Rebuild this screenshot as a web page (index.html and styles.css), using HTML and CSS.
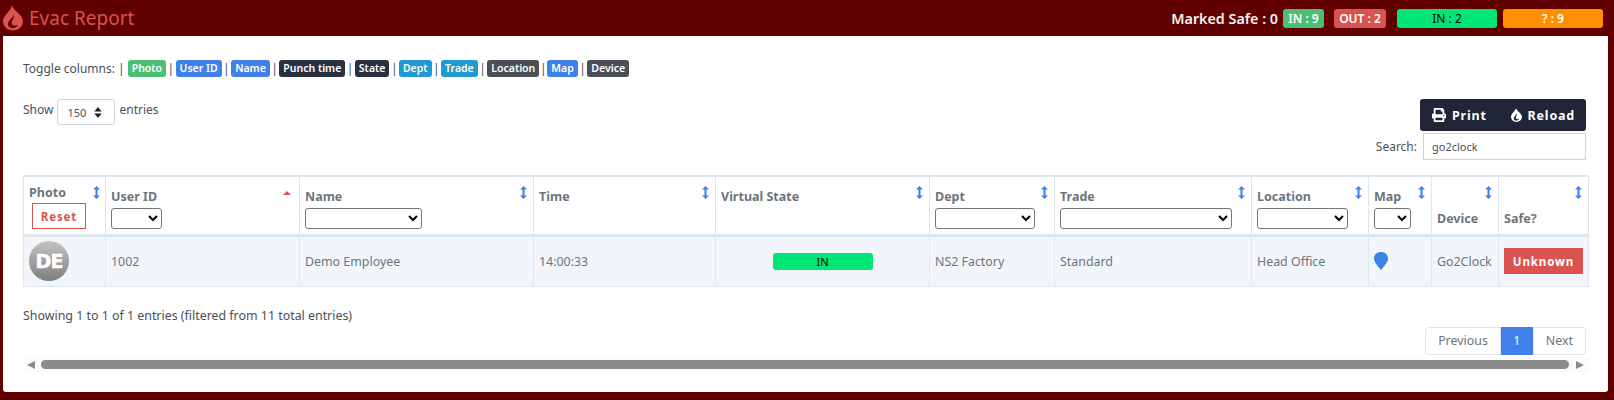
FILE: index.html
```html
<!DOCTYPE html>
<html lang="en">
<head>
  <meta charset="UTF-8">
  <meta name="viewport" content="width=device-width, initial-scale=1.0">
  <title>Evac Report</title>
  <link rel="stylesheet" href="styles.css">
</head>
<body>

  <svg class="icon-defs" aria-hidden="true">
    <symbol id="flame" viewBox="0 0 24 30">
      <path fill-rule="evenodd" d="M11 0C12 6 24 11 24 19C24 25.500 18.500 30 12 30C5.500 30 0 25.500 0 19C0 12 8 8 11 0ZM13 11C11 16 6 18 6 22.500C6 25.500 9 27 12 27C15 27 17 25.500 17.500 23C15.500 24.500 10.500 25 10.500 21C10.500 18 13.500 16 13 11Z"/>
    </symbol>
    <symbol id="sort" viewBox="0 0 7 13">
      <path d="M3.500 0L7 3.500H4.500V9.500H7L3.500 13L0 9.500H2.500V3.500H0Z"/>
    </symbol>
  </svg>

  <header class="topbar">
    <div class="brand">
      <svg class="brand-icon"><use href="#flame"></use></svg>
      <span>Evac Report</span>
    </div>
    <div class="totals">
      <span class="marked">Marked Safe : 0</span>
      <span class="tag tag-green">IN : 9</span>
      <span class="tag tag-red">OUT : 2</span>
      <span class="wide wide-green">IN : 2</span>
      <span class="wide wide-orange">? : 9</span>
    </div>
  </header>

  <main class="card">
    <div class="toggles">
      <span class="toggle-label">Toggle columns: |</span>
      <a class="pill pill-green">Photo</a><i>|</i>
      <a class="pill pill-blue">User ID</a><i>|</i>
      <a class="pill pill-blue">Name</a><i>|</i>
      <a class="pill pill-dark">Punch time</a><i>|</i>
      <a class="pill pill-dark">State</a><i>|</i>
      <a class="pill pill-cyan">Dept</a><i>|</i>
      <a class="pill pill-cyan">Trade</a><i>|</i>
      <a class="pill pill-grey">Location</a><i class="tight">|</i>
      <a class="pill pill-blue">Map</a><i>|</i>
      <a class="pill pill-grey">Device</a>
    </div>

    <div class="controls">
      <label class="length"><span class="length-text">Show</span>
        <select class="length-select"><option>150</option></select>
        <span class="length-text">entries</span>
      </label>
      <div class="controls-right">
        <div class="actions">
          <button class="action" type="button">
            <svg class="print-icon" viewBox="0 0 512 512"><path d="M448 192V77.250c0-8.490-3.370-16.620-9.370-22.630L393.370 9.370c-6-6-14.140-9.370-22.630-9.370H96C78.330 0 64 14.330 64 32v160c-35.350 0-64 28.650-64 64v112c0 8.840 7.160 16 16 16h48v96c0 17.670 14.330 32 32 32h320c17.670 0 32-14.330 32-32v-96h48c8.840 0 16-7.160 16-16V256c0-35.350-28.650-64-64-64zm-64 256H128v-96h256v96zm0-224H128V64h192v48c0 8.840 7.160 16 16 16h48v96zm48 72c-13.250 0-24-10.750-24-24 0-13.260 10.750-24 24-24s24 10.740 24 24c0 13.250-10.750 24-24 24z"/></svg>
            Print
          </button>
          <button class="action" type="button">
            <svg class="reload-icon"><use href="#flame"></use></svg>
            Reload
          </button>
        </div>
        <label class="search">Search:
          <input class="search-input" type="text" value="go2clock">
        </label>
      </div>
    </div>

    <table class="report">
      <colgroup>
        <col class="c-photo"><col class="c-id"><col class="c-name"><col class="c-time"><col class="c-state"><col class="c-dept">
        <col class="c-trade"><col class="c-loc"><col class="c-map"><col class="c-device"><col class="c-safe">
      </colgroup>
      <thead>
        <tr>
          <th class="th-photo">Photo<svg class="sort"><use href="#sort"></use></svg>
            <button class="reset" type="button">Reset</button></th>
          <th>User ID<span class="sort-asc"></span><select class="filter f-id"></select></th>
          <th>Name<svg class="sort"><use href="#sort"></use></svg><select class="filter f-name"></select></th>
          <th>Time<svg class="sort"><use href="#sort"></use></svg></th>
          <th>Virtual State<svg class="sort"><use href="#sort"></use></svg></th>
          <th>Dept<svg class="sort"><use href="#sort"></use></svg><select class="filter f-dept"></select></th>
          <th>Trade<svg class="sort"><use href="#sort"></use></svg><select class="filter f-trade"></select></th>
          <th>Location<svg class="sort"><use href="#sort"></use></svg><select class="filter f-loc"></select></th>
          <th>Map<svg class="sort"><use href="#sort"></use></svg><select class="filter f-map"></select></th>
          <th class="th-low">Device<svg class="sort"><use href="#sort"></use></svg></th>
          <th class="th-low">Safe?<svg class="sort"><use href="#sort"></use></svg></th>
        </tr>
      </thead>
      <tbody>
        <tr>
          <td><div class="avatar">DE</div></td>
          <td>1002</td>
          <td>Demo Employee</td>
          <td>14:00:33</td>
          <td><div class="state">IN</div></td>
          <td>NS2 Factory</td>
          <td>Standard</td>
          <td>Head Office</td>
          <td><svg class="pin" viewBox="0 0 14 18"><path d="M7 0C3 0 0 2.800 0 6.500C0 10.500 4.500 14.500 7 18C9.500 14.500 14 10.500 14 6.500C14 2.800 11 0 7 0Z"/></svg></td>
          <td>Go2Clock</td>
          <td><button class="unknown" type="button">Unknown</button></td>
        </tr>
      </tbody>
    </table>

    <div class="info">Showing 1 to 1 of 1 entries (filtered from 11 total entries)</div>

    <div class="pager">
      <a class="page">Previous</a>
      <a class="page page-on">1</a>
      <a class="page">Next</a>
    </div>

    <div class="scroller">
      <span class="arrow-left"></span>
      <span class="thumb"></span>
      <span class="arrow-right"></span>
    </div>
  </main>

</body>
</html>
```

FILE: styles.css
```css
* {
  margin: 0;
  padding: 0;
  box-sizing: border-box;
}

html, body {
  height: 400px;
  overflow: hidden;
}

body {
  font-family: "Noto Sans", Arial, sans-serif;
  font-size: 12px;
  color: #495057;
  background: #600000;
}

.icon-defs {
  display: none;
}

/* Top bar */
.topbar {
  height: 36px;
  display: flex;
  justify-content: space-between;
  align-items: center;
  padding: 0 11px 0 3px;
}

.brand {
  display: flex;
  align-items: center;
  gap: 6px;
  color: #d9534f;
  font-size: 19px;
}

.brand-icon {
  width: 20px;
  height: 26px;
  fill: #d9534f;
}

.totals {
  display: flex;
  align-items: center;
}

.marked {
  color: #f3f3f3;
  font-size: 14.300px;
  font-weight: 600;
  margin-right: 5px;
}

.tag,
.wide {
  font-size: 12px;
  font-weight: 600;
  text-align: center;
  border-radius: 3px;
  height: 19px;
  line-height: 19px;
  color: #fff;
}

.tag-green {
  width: 41px;
  background: #4bbf73;
}

.tag-red {
  width: 52px;
  margin-left: 10px;
  background: #d9534f;
}

.wide {
  width: 100px;
  font-weight: 400;
}

.wide-green {
  margin-left: 11px;
  background: #00e676;
  color: #000;
}

.wide-orange {
  margin-left: 6px;
  background: #ff8f00;
  font-weight: 600;
}

/* Card */
.card {
  background: #fff;
  margin: 0 6px 0 3px;
  height: 356px;
  padding: 24px 20px 0;
  border-radius: 0 0 3px 3px;
}

.toggles {
  display: flex;
  align-items: center;
  height: 17px;
  white-space: nowrap;
  font-size: 12px;
}

.toggle-label {
  margin-right: 3px;
}

.toggles i {
  font-style: normal;
  width: 9.500px;
  text-align: center;
  font-size: 12px;
}

.toggles .tight {
  width: 8px;
}

.pill {
  height: 17px;
  line-height: 17px;
  padding: 0 4px;
  border-radius: 3px;
  color: #fff;
  font-size: 10.500px;
  font-weight: 600;
}

.pill-green { background: #4bbf73; }
.pill-blue { background: #3f80ea; }
.pill-dark { background: #293042; }
.pill-cyan { background: #1f9bcf; }
.pill-grey { background: #495057; }

/* Show / search row */
.controls {
  display: flex;
  justify-content: space-between;
  margin-top: 22px;
  padding-right: 2px;
  height: 76px;
}

.length {
  display: flex;
  align-items: flex-start;
  gap: 4px;
  height: 26px;
  font-size: 12px;
}

.length-text {
  line-height: 21px;
}

.length-select {
  appearance: none;
  width: 58px;
  height: 26px;
  padding-left: 9px;
  border: 1px solid #ced4da;
  border-radius: 3px;
  background: #fff url("data:image/svg+xml,%3Csvg xmlns='http://www.w3.org/2000/svg' viewBox='0 0 8 12'%3E%3Cpath d='M4 0L8 5H0ZM4 12L0 7H8Z' fill='%23222'/%3E%3C/svg%3E") no-repeat right 12px center / 8px 11px;
  color: #495057;
  font: 11px "Noto Sans", Arial, sans-serif;
}

.controls-right {
  display: flex;
  flex-direction: column;
  align-items: flex-end;
  gap: 2px;
}

.actions {
  display: flex;
  width: 166px;
  height: 32px;
  padding: 0 11px 0 12px;
  justify-content: space-between;
  background: #1f2536;
  border-radius: 3px;
}

.action {
  display: flex;
  align-items: center;
  gap: 6px;
  border: none;
  background: none;
  color: #fff;
  font: 700 12.500px "Noto Sans", Arial, sans-serif;
  letter-spacing: 0.800px;
}

.print-icon {
  width: 14px;
  height: 14px;
  fill: #fff;
}

.reload-icon {
  width: 11px;
  height: 14px;
  fill: #fff;
}

.search {
  display: flex;
  align-items: center;
  gap: 6px;
  font-size: 12px;
}

.search-input {
  width: 163px;
  height: 27px;
  padding: 0 8px;
  border: 1px solid #ced4da;
  color: #495057;
  font: 11px "Noto Sans", Arial, sans-serif;
}

/* Table */
.report {
  width: 1565px;
  height: 112px;
  table-layout: fixed;
  border-collapse: collapse;
  color: #6c757d;
}

.c-photo { width: 82px; }
.c-id { width: 194px; }
.c-name { width: 234px; }
.c-time { width: 182px; }
.c-state { width: 214px; }
.c-dept { width: 125px; }
.c-trade { width: 197px; }
.c-loc { width: 117px; }
.c-map { width: 63px; }
.c-device { width: 67px; }
.c-safe { width: 90px; }

.report th {
  position: relative;
  height: 59px;
  padding: 12px 5px 0;
  border: 1px solid #dee6ee;
  border-top-width: 2px;
  border-bottom: 3px solid #dee6ee;
  font-size: 12.500px;
  font-weight: 700;
  line-height: 16px;
  text-align: left;
  vertical-align: top;
  white-space: nowrap;
}

.report .th-photo {
  padding-top: 8px;
}

.report .th-low {
  padding-top: 34px;
}

.report td {
  height: 51px;
  padding: 0 5px;
  border: 1px solid #dee6ee;
  background: #f2f6fa;
  font-size: 12.400px;
  white-space: nowrap;
}

.sort {
  position: absolute;
  top: 9px;
  right: 6px;
  width: 7px;
  height: 13px;
  fill: #3f80ea;
}

.th-photo .sort {
  right: 5px;
}

.sort-asc {
  position: absolute;
  top: 14px;
  right: 8px;
  border-left: 4px solid transparent;
  border-right: 4px solid transparent;
  border-bottom: 4px solid #d9534f;
}

.reset {
  display: block;
  width: 54px;
  height: 26px;
  margin: 2px 0 0 3px;
  border: 1px solid #d9534f;
  background: #fff;
  color: #d9534f;
  font: 700 11.500px "Noto Sans", Arial, sans-serif;
  letter-spacing: 0.900px;
}

.filter {
  display: block;
  height: 21px;
  margin-top: 3px;
  background: #fff;
  border-radius: 3px;
}

.f-id { width: 51px; }
.f-name { width: 117px; }
.f-dept { width: 100px; }
.f-trade { width: 172px; }
.f-loc { width: 91px; }
.f-map { width: 37px; }

.avatar {
  width: 40px;
  height: 40px;
  border-radius: 50%;
  background: linear-gradient(#c4c4c4, #7f7f7f);
  color: #fff;
  font: 700 19px/40px "DejaVu Sans", Arial, sans-serif;
  -webkit-text-stroke: 0.500px #fff;
  text-align: center;
  letter-spacing: -1px;
}

.state {
  width: 100px;
  height: 17px;
  margin: 0 auto;
  background: #00e676;
  border-radius: 3px;
  color: #000;
  font-size: 11px;
  line-height: 17px;
  text-align: center;
}

.pin {
  display: block;
  width: 14px;
  height: 18px;
  fill: #3f80ea;
}

.unknown {
  display: block;
  width: 79px;
  height: 26px;
  border: none;
  background: #d9534f;
  color: #fff;
  font: 700 11.500px "Noto Sans", Arial, sans-serif;
  letter-spacing: 0.900px;
}

/* Footer bits */
.info {
  margin-top: 20px;
  line-height: 17px;
  font-size: 12.400px;
}

.pager {
  display: flex;
  justify-content: flex-end;
  margin-top: 3px;
  padding-right: 2px;
  height: 28px;
}

.page {
  height: 28px;
  line-height: 26px;
  padding: 0 13px;
  border: 1px solid #dee6ee;
  color: #6c757d;
  font-size: 12.400px;
}

.page:first-child {
  border-radius: 3px 0 0 3px;
  padding: 0 12px;
}

.page:last-child {
  border-radius: 0 3px 3px 0;
  padding: 0 12px;
}

.page-on {
  width: 32px;
  padding: 0;
  text-align: center;
  background: #3f80ea;
  border-color: #3f80ea;
  color: #fff;
}

.scroller {
  display: flex;
  align-items: center;
  width: 1565px;
  height: 15px;
  margin-top: 2px;
  padding: 0 4px;
  background: #fbfbfb;
}

.arrow-left {
  border-top: 4px solid transparent;
  border-bottom: 4px solid transparent;
  border-right: 8px solid #8a8a8a;
}

.thumb {
  flex: 1;
  height: 9px;
  margin: 0 7px 0 6px;
  background: #8a8a8a;
  border-radius: 5px;
}

.arrow-right {
  border-top: 4px solid transparent;
  border-bottom: 4px solid transparent;
  border-left: 8px solid #8a8a8a;
}
```
